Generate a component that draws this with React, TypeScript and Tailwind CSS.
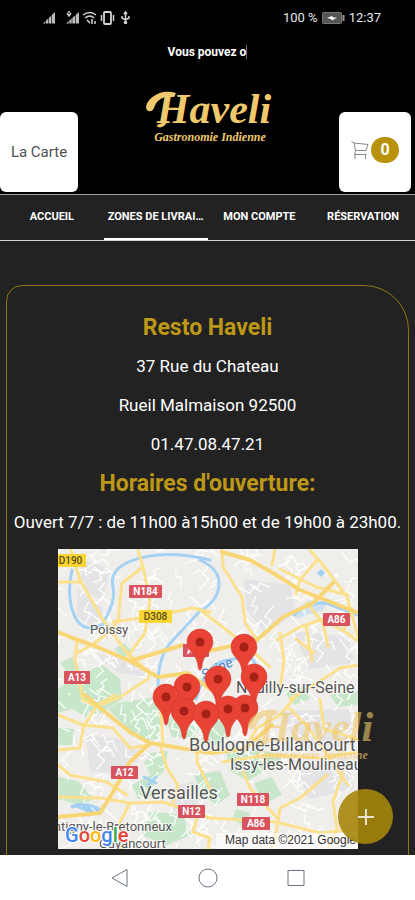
import clsx from "clsx";

const TABS = ["ACCUEIL", "ZONES DE LIVRAI…", "MON COMPTE", "RÉSERVATION"];
const ACTIVE_TAB = 1;

const ADDRESS = ["37 Rue du Chateau", "Rueil Malmaison 92500", "01.47.08.47.21"];

// all map coordinates live in a 300x300 box
const GREENS = [
  "M30 122L45 116L62 130L64 150L40 166L0 150V140L16 128Z",
  "M0 150L36 152L28 168L14 160L0 164Z",
  "M2 114L14 108L22 120L10 124Z",
  "M56 100L66 94L74 102L66 109Z",
  "M60 154L96 148L104 166L100 190L84 192L64 174L50 160Z",
  "M108 170L130 164L142 178L136 190L114 188Z",
  "M92 204L110 202L106 222L96 232L86 214Z",
  "M0 228L20 232L36 250L22 256L0 250Z",
  "M0 178L16 180L14 196L0 196Z",
  "M74 236L96 224L100 246L80 250Z",
  "M142 176L164 170L174 186L160 196L144 194Z",
  "M168 204L200 200L206 222L190 232L172 222Z",
  "M136 226L162 222L172 246L158 256L142 244Z",
  "M196 234L214 228L224 246L204 256Z",
  "M226 142L246 138L252 150L236 156Z",
  "M92 262L124 266L134 286L108 296L84 286Z",
  "M206 202L226 206L218 220L208 216Z",
  "M178 260L192 264L186 278L174 270Z",
  "M272 146L300 142V156L280 158Z",
];

const URBAN = [
  "M186 30L232 36L238 66L206 84L188 60Z",
  "M22 10L52 20L44 52L24 40Z",
  "M20 40L44 58L46 70L30 76L18 66Z",
  "M28 186L62 190L86 206L66 226L32 222Z",
  "M236 82L290 88L296 114L250 120Z",
  "M222 162L292 160L296 196L240 198Z",
  "M110 240L136 232L140 260L116 262Z",
  "M36 104L80 112L90 128L60 124Z",
  "M240 220L290 208L296 240L250 250Z",
];

const RIVERS = [
  "M152 11Q122 4 100 6T65 16T55 38T46 72",
  "M14 21Q8 50 17 68T47 74",
  "M142 11Q162 20 161 36T142 62L115 91Q100 106 100 136",
  "M138 150Q148 116 166 112T192 108Q204 118 196 138",
  "M236 66Q246 54 268 54L300 66",
  "M14 258Q30 252 44 262",
  "M86 228L98 234M90 236L98 228",
];

const ROADS = [
  "M12 -2L22 31L45 71L69 104L92 124",
  "M0 33L22 33",
  "M80 1L85 18L64 34L60 71",
  "M85 18L92 51L87 84L72 104L69 112",
  "M55 73L102 66L135 59L152 63",
  "M19 91L17 111L25 151L42 159",
  "M19 104L34 96L50 84L60 72",
  "M92 124L90 130L62 148L42 156",
  "M164 1L165 18L184 48L187 74L199 91",
  "M217 0L214 16",
  "M252 1L269 21L289 48L300 88",
  "M142 61L162 76L185 94L212 118",
  "M219 91L242 78L265 70L289 84L300 92",
  "M259 11L242 31L238 45",
  "M249 54L265 74L270 98",
  "M302 116L282 119L259 134L232 150",
  "M222 84L226 112L222 140",
  "M238 90L256 104M248 76L254 112M286 80L294 60",
  "M222 20L258 38L290 46",
  "M0 166L25 176L55 179L72 199L92 196",
  "M57 146L39 156L25 179L22 199L0 201",
  "M0 216L12 226L49 233L69 246",
  "M0 248L42 249L72 254L105 253L132 262L152 269",
  "M102 196L109 219L120 236L115 253",
  "M102 150L105 196",
  "M139 189L139 213L152 240",
  "M72 254L62 273L64 300",
  "M139 269L135 283L152 289L150 300",
  "M152 269L218 273L262 284L300 280",
  "M239 146L222 166L199 179L186 202",
  "M269 226L242 249L222 259L219 279L214 300",
  "M185 223L192 239L219 269",
  "M285 223L275 253L279 279L270 300",
  "M165 213L209 206L262 209L300 203",
  "M262 150L266 180L300 190",
  "M232 160L250 178L290 236",
];

const HIGHWAYS = [
  "M0 83L12 88L42 99L72 112L125 96L142 104L199 91L225 68L255 54L275 34",
  "M164 3L192 11L215 24L242 41L275 54L300 64",
  "M27 146L42 159L72 183L92 194L152 204L186 200L214 176",
  "M92 194L72 213L55 243L42 264L0 268",
  "M72 112L100 128L130 124L152 140",
];

// fine street mesh, slightly jittered so it does not look like graph paper
const STREETS = Array.from({ length: 340 }, (_, i) => {
  const x = (i * 47.3) % 300;
  const y = (i * 83.7 + Math.sin(i) * 30 + 300) % 300;
  const a = Math.sin(i * 12.9) * 12;
  const b = Math.cos(i * 7.3) * 12;
  return `M${x.toFixed(1)} ${y.toFixed(1)}l${a.toFixed(1)} ${b.toFixed(1)}l${(b * 0.6).toFixed(1)} ${(-a * 0.5).toFixed(1)}l${(a * 0.7).toFixed(1)} ${(b * 0.8).toFixed(1)}`;
}).join("");

const SHIELDS = [
  { label: "D190", x: -3, y: 5, w: 31, yellow: true },
  { label: "N184", x: 71, y: 36, w: 33 },
  { label: "D308", x: 81, y: 61, w: 33, yellow: true },
  { label: "A13", x: 6, y: 122, w: 26 },
  { label: "A14", x: 125, y: 95, w: 26 },
  { label: "A86", x: 265, y: 64, w: 27 },
  { label: "A12", x: 53, y: 217, w: 27 },
  { label: "N12", x: 120, y: 256, w: 27 },
  { label: "N118", x: 179, y: 244, w: 32 },
  { label: "A86", x: 184, y: 268, w: 28 },
];

const PLACES = [
  { name: "Poissy", x: 32, y: 85, size: 13 },
  { name: "Neuilly-sur-Seine", x: 178, y: 144, size: 16 },
  { name: "Boulogne-Billancourt", x: 131, y: 202, size: 18 },
  { name: "Issy-les-Moulineaux", x: 172, y: 221, size: 16 },
  { name: "Versailles", x: 82, y: 250, size: 18 },
  { name: "Montigny-le-Bretonneux", x: -23, y: 282, size: 13 },
  { name: "Guyancourt", x: 41, y: 299, size: 13 },
];

const PINS = [
  [142, 93],
  [186, 98],
  [129, 138],
  [160, 130],
  [196, 128],
  [108, 148],
  [187, 159],
  [170, 160],
  [126, 162],
  [148, 165],
];

const GOOGLE = [
  ["G", "#4285f4"],
  ["o", "#ea4335"],
  ["o", "#fbbc05"],
  ["g", "#4285f4"],
  ["l", "#34a853"],
  ["e", "#ea4335"],
];

export default function App() {
  return (
    <div className="relative flex h-screen flex-col overflow-hidden bg-[#222222] font-[Roboto,sans-serif] text-white">
      <StatusBar />
      <header className="shrink-0 bg-black">
        <p className="h-9 pt-2 text-center text-xs leading-4 font-bold">
          Vous pouvez o<span className="border-r border-gray-500" />
        </p>
        <div className="flex h-[123px] items-end justify-between border-b border-gray-400 pr-1 pb-0.5">
          <button type="button" className="h-20 w-[78px] rounded-md bg-white text-[15px] text-neutral-600">
            La Carte
          </button>
          <Logo className="mt-4 w-32 self-start" />
          <button
            type="button"
            aria-label="Panier"
            className="flex h-20 w-[72px] items-center justify-center gap-0.5 rounded-md bg-white pb-1"
          >
            <CartIcon />
            <span className="flex h-[26px] w-7 items-center justify-center rounded-full bg-[#b8920b] text-base font-bold">
              0
            </span>
          </button>
        </div>
      </header>
      <Tabs />

      <main className="min-h-0 flex-1 overflow-hidden px-1.5 pt-11">
        <section className="flex flex-col items-center rounded-tl-2xl rounded-tr-[45px] border border-[#947514] pt-[22px] pb-10 text-center text-[17px] leading-[39px]">
          <h1 className="text-[23px] leading-[39px] font-bold text-[#bd9716]">Resto Haveli</h1>
          {ADDRESS.map((line) => (
            <p key={line}>{line}</p>
          ))}
          <h2 className="text-[23px] leading-[39px] font-bold text-[#bd9716]">Horaires d'ouverture:</h2>
          <p className="whitespace-nowrap">Ouvert 7/7 : de 11h00 à15h00 et de 19h00 à 23h00.</p>
          <DeliveryMap />
        </section>
      </main>

      <AndroidNav />
      <Logo className="pointer-events-none absolute right-10 bottom-[134px] w-32 opacity-60" />
      <button
        type="button"
        aria-label="Ajouter"
        className="absolute right-[22px] bottom-14 flex size-[55px] items-center justify-center rounded-full bg-[#a5850b]/90"
      >
        <svg viewBox="0 0 16 16" className="size-4" stroke="#e8e2cc" strokeWidth="2">
          <path d="M8 0V16M0 8H16" />
        </svg>
      </button>
    </div>
  );
}

function StatusBar() {
  return (
    <div className="flex h-9 shrink-0 items-center justify-between bg-black pr-[34px] pl-[42px] text-[13px] text-gray-200">
      <svg viewBox="0 0 90 16" className="h-4 w-[90px]" fill="none" stroke="#d4d4d4" strokeWidth="1.5">
        <path d="M1 13.500H13V2Z" fill="#bbb" stroke="none" />
        <path d="M24 13.500H37V2Z" fill="#bbb" stroke="none" />
        <path d="M3.500 14V2M6.500 14V2M9.500 14V2M27 14V2M30 14V2M33.500 14V2" stroke="#000" strokeWidth="0.600" />
        <path d="M25 3l2 3 2-3M27 1v2" />
        <path d="M41 5q7-5 13 0M43 8q5-4 9 0M45 10l3 3M50 9v5M53 11v3" />
        <rect x="62" y="2" width="7" height="12" rx="1" strokeWidth="1.800" />
        <path d="M59.500 5v6M71.500 5v6" />
        <path d="M83.500 3v10M80 6v2l3.500 2L87 8V6M82 4L83.500 2L85 4" />
        <circle cx="83.500" cy="12.500" r="1" />
      </svg>
      <div className="flex items-center gap-1">
        <span>100 %</span>
        <svg viewBox="0 0 23 12" className="h-3 w-[23px]">
          <rect x="0.5" y="0.5" width="19" height="11" rx="1" fill="#555" stroke="#777" />
          <rect x="20.500" y="3" width="2" height="6" fill="#999" />
          <path d="M5 6l5-2 1 1.500h4L10 8.500 9 7z" fill="#fff" />
        </svg>
        <span>12:37</span>
      </div>
    </div>
  );
}

function Logo({ className }: { className?: string }) {
  return (
    <svg viewBox="0 0 128 60" className={className} fill="#efc96c" role="img" aria-label="Haveli Gastronomie Indienne">
      {/* flourish in front of the capital */}
      <path d="M31 5C16 0 2 10 1 19c0 5 6 6 8 1C11 13 18 7 29 9z" />
      <path d="M19 33c-3 4-8 3-7 5 2 3 8 1 10-4z" />
      <text
        x="69"
        y="35"
        textAnchor="middle"
        fontFamily="Liberation Serif, serif"
        fontSize="42"
        fontWeight="700"
        fontStyle="italic"
      >
        Haveli
      </text>
      <text
        x="65"
        y="53"
        textAnchor="middle"
        fontFamily="Liberation Serif, serif"
        fontSize="12"
        fontWeight="700"
        fontStyle="italic"
      >
        Gastronomie Indienne
      </text>
    </svg>
  );
}

function CartIcon() {
  return (
    <svg viewBox="0 0 18 20" className="h-5 w-[18px]" fill="none" stroke="#888" strokeWidth="1">
      <path d="M0.500 1.500L3 3L4.500 10.500H15L17 4.500L3 3M4.500 10.500L3.500 14.500H15.500M4 14.500V19M14.500 14.500V19" />
    </svg>
  );
}

function Tabs() {
  return (
    <nav className="grid h-[46px] shrink-0 grid-cols-4 border-b border-gray-300 text-center text-[11px] font-bold">
      {TABS.map((tab, i) => (
        <a
          key={tab}
          href="#"
          aria-current={i === ACTIVE_TAB ? "page" : undefined}
          className={clsx(
            "truncate border-b-2 leading-[43px]",
            i === ACTIVE_TAB ? "border-white" : "border-transparent",
          )}
        >
          {tab}
        </a>
      ))}
    </nav>
  );
}

function DeliveryMap() {
  return (
    <svg
      viewBox="0 0 300 300"
      className="mt-[7px] size-[300px] shrink-0 bg-[#f0eeea]"
      fontFamily="Roboto, sans-serif"
      role="img"
      aria-label="Zones de livraison"
    >
      <g fill="#e4e4e6">
        {URBAN.map((d) => (
          <path key={d} d={d} />
        ))}
      </g>
      <g fill="#c8e6ca">
        {GREENS.map((d) => (
          <path key={d} d={d} />
        ))}
      </g>
      <path d="M232 64L252 51L269 53L265 61L239 69Z" fill="#cfe0f0" />
      <path d="M259 24l4-4 4 4-4 4zM12 256l10-2 24 8-12 3z" fill="#9fd0f5" />
      <g fill="none" strokeLinejoin="round" strokeLinecap="round">
        <path d={STREETS} stroke="#fff" strokeWidth="1.200" />
        <g stroke="#a5d2f4" strokeWidth="3">
          {RIVERS.map((d) => (
            <path key={d} d={d} />
          ))}
        </g>
        <g stroke="#fbe08d" strokeWidth="3">
          {ROADS.map((d) => (
            <path key={d} d={d} />
          ))}
        </g>
        <g stroke="#f8d676" strokeWidth="4">
          {HIGHWAYS.map((d) => (
            <path key={d} d={d} />
          ))}
        </g>
      </g>

      {SHIELDS.map((s) => (
        <g key={`${s.label}-${s.x}`}>
          <rect x={s.x} y={s.y} width={s.w} height="13" rx="1" fill={s.yellow ? "#f9d536" : "#d9535f"} />
          <text
            x={s.x + s.w / 2}
            y={s.y + 10}
            textAnchor="middle"
            fontSize="10"
            fontWeight={s.yellow ? 500 : 700}
            fill={s.yellow ? "#5a4e10" : "#fff"}
          >
            {s.label}
          </text>
        </g>
      ))}

      <text x="146" y="131" fontSize="14" fontStyle="italic" fill="#4a80cc" transform="rotate(-26 146 131)">
        Seine
      </text>
      <g fill="#555" stroke="#fff" strokeWidth="2" strokeOpacity="0.7" paintOrder="stroke">
        {PLACES.map((p) => (
          <text key={p.name} x={p.x} y={p.y} fontSize={p.size}>
            {p.name}
          </text>
        ))}
      </g>

      {PINS.map(([x, y]) => (
        <g key={`${x}-${y}`} transform={`translate(${x} ${y})`}>
          <path
            d="M0 28C-1.500 28-2 25-2.500 21C-4 12-13 9-13 0A13 13 0 0 1 13 0C13 9 4 12 2.500 21C2 25 1.500 28 0 28Z"
            fill="#e94335"
            stroke="#c9362b"
            strokeWidth="0.5"
          />
          <circle r="4.500" fill="#a52118" />
        </g>
      ))}

      <rect x="158" y="284" width="142" height="16" fill="#fff" fillOpacity="0.65" />
      <text x="298" y="295" textAnchor="end" fontSize="12" fill="#333" fontFamily="Liberation Sans, sans-serif">
        Map data ©2021 Google
      </text>
      <text x="7" y="293" fontSize="20" fontWeight="500" stroke="#fff" strokeWidth="2" paintOrder="stroke">
        {GOOGLE.map(([letter, fill], i) => (
          <tspan key={i} fill={fill}>
            {letter}
          </tspan>
        ))}
      </text>
    </svg>
  );
}

function AndroidNav() {
  return (
    <div className="flex h-[45px] shrink-0 items-center justify-center gap-[68px] bg-white text-gray-500">
      <button type="button" aria-label="Retour">
        <NavShape d="M17 1.500V18.500L2 10Z" />
      </button>
      <button type="button" aria-label="Accueil">
        <NavShape d="M10 1a9 9 0 1 1 0 18a9 9 0 0 1 0-18Z" />
      </button>
      <button type="button" aria-label="Applications">
        <NavShape d="M2 2.500H18V17.500H2Z" />
      </button>
    </div>
  );
}

function NavShape({ d }: { d: string }) {
  return (
    <svg viewBox="0 0 20 20" className="size-5" fill="none" stroke="currentColor" strokeLinejoin="round">
      <path d={d} />
    </svg>
  );
}
